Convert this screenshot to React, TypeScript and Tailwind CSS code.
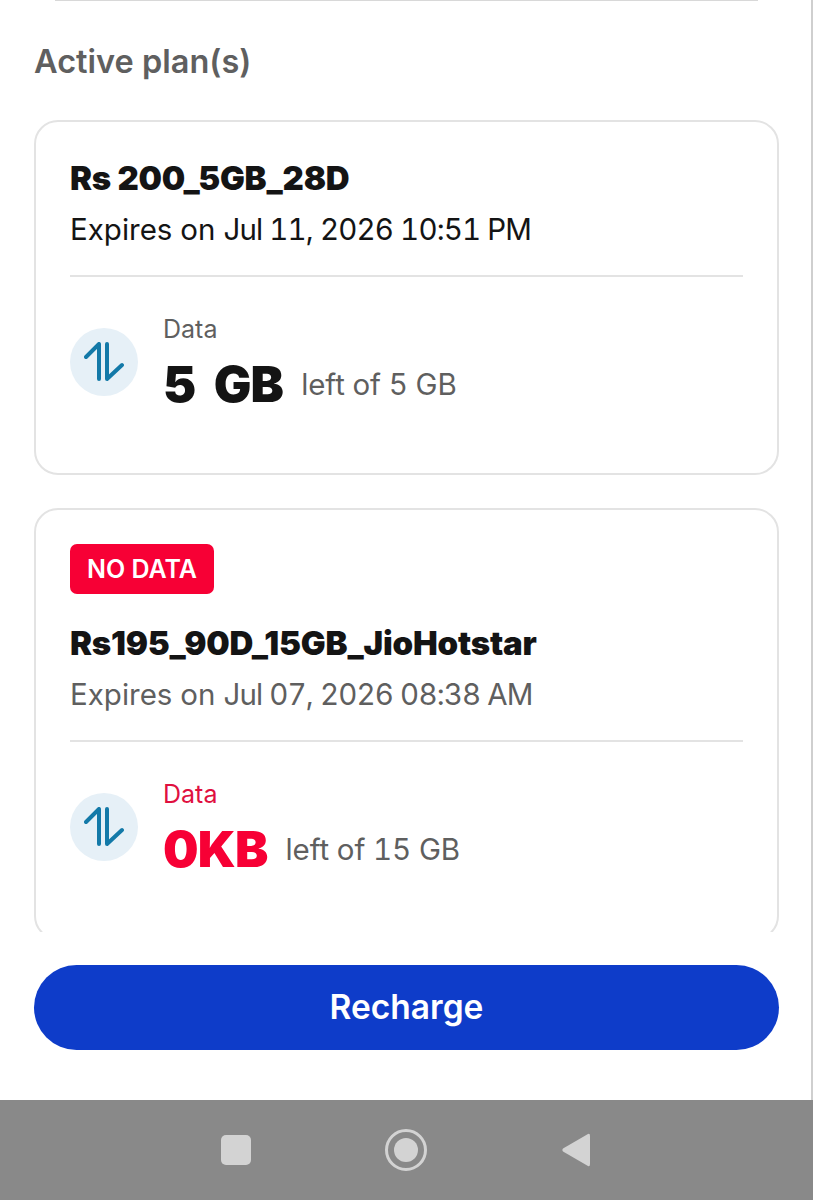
const DataIcon = () => (
  <div className="flex h-[68px] w-[68px] shrink-0 items-center justify-center rounded-full bg-[#e6f0f7]">
    <svg width="40" height="40" viewBox="0 0 40 40" fill="none" stroke="#1379a8" strokeWidth="4" strokeLinecap="round" strokeLinejoin="round">
      <path d="M2 15 L15 2 L15 37" />
      <path d="M23 2 L23 37 L38 23" />
    </svg>
  </div>
);

type PlanProps = {
  name: string;
  expires: string;
  amount: string;
  total: string;
  empty?: boolean;
};

const PlanCard = ({ name, expires, amount, total, empty }: PlanProps) => (
  <div className={`rounded-[24px] border-2 border-[#e3e3e3] px-[34px] pt-[34px] ${empty ? 'h-[432px] shrink-0' : 'h-[355px]'}`}>
    {empty && (
      <div className="mb-[27px] flex h-[50px] w-[144px] items-center justify-center rounded-[7px] bg-[#f70035] pt-[2px] text-[25px] font-semibold text-white">
        NO DATA
      </div>
    )}
    <div className="text-[33px] leading-[44px] font-black tracking-[-0.2px] text-[#141414]">{name}</div>
    <div className={`mt-[11px] text-[29.500px] leading-[36px] tabular-nums ${empty ? 'text-[#5f5f5f]' : 'text-[#141414]'}`}>
      Expires on <span className="tracking-[-0.86px]">{expires}</span>
    </div>
    <div className="mt-[28px] h-[2px] bg-[#e3e3e3]" />
    <div className="mt-[37px] flex items-center gap-[25px]">
      <DataIcon />
      <div>
        <div className={`text-[25px] leading-[30px] ${empty ? 'text-[#e0103f]' : 'text-[#5f5f5f]'}`}>Data</div>
        <div className="mt-[14px] flex items-center gap-[18px]">
          <span className={`text-[50px] leading-[52px] font-black tracking-[-0.8px] [word-spacing:9px] ${empty ? 'text-[#f70035]' : 'text-[#141414]'}`}>{amount}</span>
          <span className="text-[29.500px] leading-[36px] tracking-[-0.1px] text-[#5f5f5f] tabular-nums">{total}</span>
        </div>
      </div>
    </div>
  </div>
);

export default function App() {
  return (
    <div className="flex h-[1200px] w-[813px] flex-col overflow-hidden bg-white font-['Inter',sans-serif]">
      <div className="flex h-[1100px] flex-col border-r-2 border-[#cfcfcf]">
        <div className="mx-[55px] h-[1px] w-[703px] bg-[#d8d8d8]" />
        <div className="h-[931px] overflow-hidden pr-[32px] pl-[34px]">
          <h2 className="mt-[39px] text-[32.500px] leading-[44px] font-semibold text-[#5f5f5f]">Active plan(s)</h2>
          <div className="mt-[36px] flex flex-col gap-[33px]">
            <PlanCard name="Rs 200_5GB_28D" expires="Jul 11, 2026 10:51 PM" amount="5 GB" total="left of 5 GB" />
            <PlanCard name="Rs195_90D_15GB_JioHotstar" expires="Jul 07, 2026 08:38 AM" amount="0KB" total="left of 15 GB" empty />
          </div>
        </div>
        <div className="pt-[33px] pr-[32px] pl-[34px]">
          <button className="flex h-[85px] w-full items-center justify-center rounded-full bg-[#0e3cc9] text-[33.500px] font-semibold text-white">
            Recharge
          </button>
        </div>
      </div>
      <div className="flex h-[100px] items-center bg-[#898989] pl-[221px]">
        <div className="h-[30px] w-[30px] rounded-[5px] bg-[#d3d3d3]" />
        <div className="ml-[134px] flex h-[42px] w-[42px] items-center justify-center rounded-full border-[3px] border-[#d3d3d3]">
          <div className="h-[24px] w-[24px] rounded-full bg-[#d3d3d3]" />
        </div>
        <svg className="ml-[134px]" width="30" height="36" viewBox="0 0 30 36">
          <path d="M27 2 Q29 1 29 4 L29 32 Q29 35 27 34 L2 19.500 Q0.500 18 2 16.500 Z" fill="#d3d3d3" />
        </svg>
      </div>
    </div>
  );
}
